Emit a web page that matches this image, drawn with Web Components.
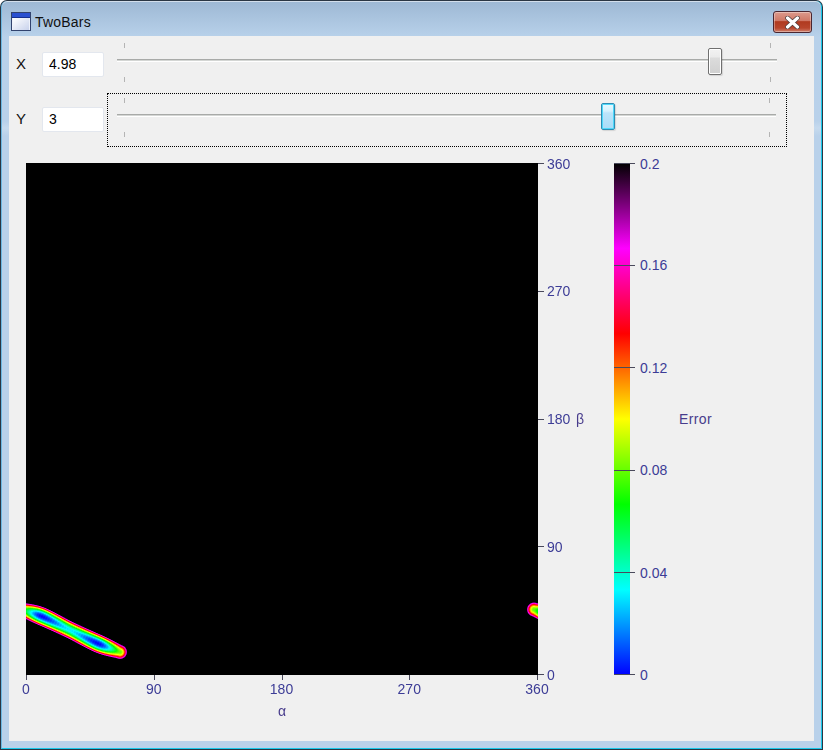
<!DOCTYPE html>
<html>
<head>
<meta charset="utf-8">
<title>TwoBars</title>
<style>
  html, body { margin: 0; padding: 0; background: #fff; }
  body { width: 823px; height: 750px; overflow: hidden; font-family: "Liberation Sans", Arial, sans-serif; }
</style>
</head>
<body>
<two-bars-window caption="TwoBars">
  <slider-row label="X" value="4.98" thumb="715"></slider-row>
  <slider-row label="Y" value="3" thumb="608" focused></slider-row>
  <plot-area></plot-area>
</two-bars-window>

<script>
class TwoBarsWindow extends HTMLElement {
  constructor() {
    super();
    this.attachShadow({ mode: "open" });
  }
  connectedCallback() {
    this.shadowRoot.innerHTML = `
      <style>
        :host {
          display: block;
          box-sizing: border-box;
          width: 823px;
          height: 750px;
          padding: 1px;
          border-radius: 7px 7px 0 0;
          background: #2a3644;
        }
        .frame {
          box-sizing: border-box;
          height: 100%;
          display: flex;
          flex-direction: column;
          padding: 0 7px 7px 7px;
          border-left: 1px solid #6cb8e2;
          border-right: 1px solid #18c8ea;
          border-bottom: 1px solid #18c8ea;
          border-radius: 6px 6px 0 0;
          background: linear-gradient(#9db8d4 0, #b8d1ea 36px, #b9d1ea 120px, #c6daee 127px, #b9d1ea 135px);
          box-shadow: inset 0 1px 0 rgba(255,255,255,.55);
        }
        .title {
          height: 35px;
          flex: none;
          display: flex;
          align-items: flex-start;
          gap: 4px;
          padding-left: 2px;
          font-size: 14px;
          letter-spacing: .2px;
          color: #111;
        }
        .title svg.ico { margin-top: 11px; flex: none; }
        .title span { margin-top: 13px; line-height: 16px; }
        .close {
          margin-left: auto;
          margin-right: 2px;
          margin-top: 10px;
          box-sizing: border-box;
          width: 39px;
          height: 22px;
          border: 1px solid #4a2630;
          border-radius: 3px;
          display: flex;
          align-items: center;
          justify-content: center;
          background: linear-gradient(#dc9a8c 0, #cf7765 45%, #b03a20 48%, #b8452c 80%, #d0806c 100%);
          box-shadow: inset 0 0 0 1px rgba(255,255,255,.35);
        }
        .client {
          flex: 1;
          background: #f0f0f0;
          display: flex;
          flex-direction: column;
          min-height: 0;
        }
      </style>
      <div class="frame">
        <div class="title">
          <svg class="ico" width="20" height="20" viewBox="0 0 20 20">
            <defs><linearGradient id="wg" x1="0" y1="0" x2="1" y2="1"><stop offset="0" stop-color="#ffffff"/><stop offset="1" stop-color="#c8d2ec"/></linearGradient></defs>
            <rect x="0.5" y="0.5" width="19" height="18" fill="#eef2fb" stroke="#32436e"/>
            <rect x="1" y="1" width="18" height="4" fill="#2a50d0"/>
            <rect x="1" y="5" width="18" height="1" fill="#16308f"/>
            <rect x="2" y="6" width="16" height="12" fill="url(#wg)"/>
          </svg>
          <span>${this.getAttribute("caption")}</span>
          <div class="close">
            <svg width="15" height="13" viewBox="0 0 15 13">
              <path d="M2.5 2 L12.5 11 M12.5 2 L2.5 11" stroke="#4a3a3a" stroke-width="4.6" stroke-linecap="round"/>
              <path d="M2.5 2 L12.5 11 M12.5 2 L2.5 11" stroke="#fff" stroke-width="3.2" stroke-linecap="round"/>
            </svg>
          </div>
        </div>
        <div class="client"><slot></slot></div>
      </div>`;
  }
}

class SliderRow extends HTMLElement {
  constructor() {
    super();
    this.attachShadow({ mode: "open" });
  }
  connectedCallback() {
    const focused = this.hasAttribute("focused");
    // thumb attr is the page x of the thumb centre; the row starts at page x 9
    const left = +this.getAttribute("thumb") - 9 - 99 - 7;
    // the unfocused row sits one pixel lower inside its box
    const d = focused ? 0 : 1;
    const endTick = focused ? 661 : 662;
    this.shadowRoot.innerHTML = `
      <style>
        :host { display: flex; align-items: flex-start; height: 56px; font-size: 14px; color: #000; }
        .lab { width: 33px; padding-left: 7px; box-sizing: border-box; font-size: 15px; line-height: 17px; margin-top: ${focused ? 18 : 19}px; color: #111; }
        input {
          box-sizing: border-box;
          width: 62px;
          height: 25px;
          margin: ${focused ? 15 : 16}px 0 0;
          padding: 0 6px 2px;
          border: 1px solid #e3e7ee;
          border-radius: 2px;
          background: #fff;
          font: 14px "Liberation Sans", Arial, sans-serif;
          color: #000;
          outline: none;
        }
        .bar {
          position: relative;
          box-sizing: border-box;
          width: 680px;
          height: 54px;
          margin: 1px 0 0 3px;
          border: 1px dotted ${focused ? "#000" : "transparent"};
          flex: none;
        }
        .track {
          position: absolute;
          left: 9px;
          right: ${focused ? 10 : 9}px;
          top: ${20 + d}px;
          height: 2px;
          background: linear-gradient(#a8aaa8 50%, #d4d6d4 50%);
          border-bottom: 1px solid #fff;
        }
        .tick { position: absolute; width: 1px; height: 5px; background: #b4b4b4; }
        .thumb {
          position: absolute;
          box-sizing: border-box;
          left: ${left}px;
          top: ${9 + d}px;
          width: 14px;
          height: 27px;
          border-radius: 2px;
          border: 1px solid ${focused ? "#2c8cb4" : "#707070"};
          background: ${focused
            ? "linear-gradient(#e6f9ff 0, #d6f2fe 7px, #bce4fa 9px, #a9dcf8 100%)"
            : "linear-gradient(#f2f2f2 0, #ebebeb 8px, #dcdcdc 9px, #d0d0d0 100%)"};
          box-shadow: inset 0 0 0 1px ${focused ? "#4fd8fa" : "#fff"}, 1px 1px 1px rgba(0,0,0,.12);
        }
      </style>
      <span class="lab">${this.getAttribute("label")}</span>
      <input value="${this.getAttribute("value")}">
      <div class="bar">
        <div class="tick" style="left:16px;top:${4 + d}px"></div>
        <div class="tick" style="left:${endTick}px;top:${4 + d}px"></div>
        <div class="track"></div>
        <div class="thumb"></div>
        <div class="tick" style="left:16px;top:${38 + d}px"></div>
        <div class="tick" style="left:${endTick}px;top:${38 + d}px"></div>
      </div>`;
  }
}

// same colour ramp for the heat map and the colour bar, v goes 0..0.2
const RAMP = [[0, 0, 255], [0, 255, 255], [0, 255, 0], [255, 255, 0], [255, 0, 0], [255, 0, 255], [0, 0, 0]];
function rampColor(v) {
  const t = Math.max(0, Math.min(1, v / 0.2)) * 6;
  const i = Math.min(5, Math.floor(t));
  const f = t - i;
  return RAMP[i].map((c, k) => Math.round(c + (RAMP[i + 1][k] - c) * f));
}

// valley of the error surface, in page pixels: x, y, value at the bottom
const KNOTS = [[22, 609.5, 0.08], [42, 616.5, 0.0], [70, 630, 0.03], [98, 643.5, 0.0], [120, 652, 0.08]];
const VALLEY = [];
for (let i = 0; i < KNOTS.length - 1; i++) {
  const p0 = KNOTS[Math.max(0, i - 1)], p1 = KNOTS[i], p2 = KNOTS[i + 1], p3 = KNOTS[Math.min(KNOTS.length - 1, i + 2)];
  for (let j = 0; j < 12; j++) {
    const t = j / 12, s = t * t * (3 - 2 * t);
    const cr = k => .5 * (2 * p1[k] + (p2[k] - p0[k]) * t + (2 * p0[k] - 5 * p1[k] + 4 * p2[k] - p3[k]) * t * t + (3 * p1[k] - p0[k] - 3 * p2[k] + p3[k]) * t * t * t);
    VALLEY.push([cr(0), cr(1), p1[2] + (p2[2] - p1[2]) * s]);
  }
}
VALLEY.push(KNOTS[KNOTS.length - 1]);

function errorAt(x, y) {
  let best = 1;
  for (const p of VALLEY) {
    const d2 = (x - p[0]) ** 2 + (y - p[1]) ** 2;
    best = Math.min(best, p[2] + 0.0022 * d2);
  }
  return best;
}

class HeatMap extends HTMLElement {
  constructor() {
    super();
    this.attachShadow({ mode: "open" });
  }
  connectedCallback() {
    this.shadowRoot.innerHTML = `
      <style>
        :host { display: block; width: 512px; height: 512px; background: #000; }
        canvas { display: block; width: 512px; height: 512px; }
      </style>
      <canvas width="512" height="512"></canvas>`;
    const ctx = this.shadowRoot.querySelector("canvas").getContext("2d");
    const img = ctx.createImageData(512, 512);
    for (let r = 0; r < 512; r++) {
      for (let c = 0; c < 512; c++) {
        const x = 26 + c + .5, y = 163 + r + .5;
        let v = 1;
        // only the bottom left corner and its wrap at 360 alpha hold anything
        if (y > 590 && y < 670) {
          if (x < 140) v = errorAt(x, y);
          if (x > 500) v = errorAt(x - 512, y);
        }
        const col = rampColor(v);
        const o = (r * 512 + c) * 4;
        img.data[o] = col[0]; img.data[o + 1] = col[1]; img.data[o + 2] = col[2]; img.data[o + 3] = 255;
      }
    }
    ctx.putImageData(img, 0, 0);
  }
}

class ColorBar extends HTMLElement {
  constructor() {
    super();
    this.attachShadow({ mode: "open" });
  }
  connectedCallback() {
    const stops = RAMP.map((c, i) => `rgb(${c}) ${(i * 100 / 6).toFixed(2)}%`).join(",");
    const labels = ["0", "0.04", "0.08", "0.12", "0.16", "0.2"];
    const ticks = labels.map((t, i) => `
      <i style="bottom:${i * 102.2}px"></i>
      <span style="bottom:${i === 5 ? 511 : i * 102.4}px">${t}</span>`).join("");
    this.shadowRoot.innerHTML = `
      <style>
        :host {
          display: block;
          position: relative;
          width: 16px;
          height: 512px;
          background: linear-gradient(to top, ${stops});
          font-size: 14px;
          color: var(--axis);
        }
        i { position: absolute; left: 0; width: 21px; height: 1px; background: #4a4a5c; }
        span { position: absolute; left: 26px; line-height: 16px; margin-bottom: -8px; }
        b {
          position: absolute;
          left: 65px;
          top: 248px;
          font-weight: normal;
          line-height: 16px;
          letter-spacing: .4px;
          color: #483c8c;
        }
      </style>
      ${ticks}
      <b>Error</b>`;
  }
}

class PlotArea extends HTMLElement {
  constructor() {
    super();
    this.attachShadow({ mode: "open" });
  }
  connectedCallback() {
    const marks = [0, 90, 180, 270, 360];
    const xm = marks.map((m, i) => `
      <i class="xt" style="left:${i * 127.75}px"></i>
      <span class="xl" style="left:${i * 127.75}px">${m}</span>`).join("");
    const ym = marks.map((m, i) => `
      <i class="yt" style="bottom:${i * 127.75}px"></i>
      <span class="yl" style="bottom:${i === 4 ? 511 : i * 128}px">${m}</span>`).join("");
    this.shadowRoot.innerHTML = `
      <style>
        :host {
          display: flex;
          --axis: #3c3c96;
          padding: 15px 0 0 17px;
          font-size: 14px;
          color: var(--axis);
        }
        .chart { position: relative; width: 512px; height: 512px; flex: none; }
        i { position: absolute; background: #4a4a5c; }
        .xt { top: 512px; width: 1px; height: 5px; }
        .yt { left: 512px; width: 6px; height: 1px; }
        span { position: absolute; line-height: 16px; }
        .xl { top: 518px; width: 40px; margin-left: -20px; text-align: center; }
        .yl { left: 521px; margin-bottom: -8px; }
        .name { color: #483c8c; }
        .alpha { left: 256px; top: 540px; width: 0; display: flex; justify-content: center; }
        .beta { left: 550px; top: 248px; }
        color-bar { margin-left: 76px; }
      </style>
      <div class="chart">
        <heat-map></heat-map>
        ${xm}${ym}
        <span class="name alpha">α</span>
        <span class="name beta">β</span>
      </div>
      <color-bar></color-bar>`;
  }
}

customElements.define("two-bars-window", TwoBarsWindow);
customElements.define("slider-row", SliderRow);
customElements.define("heat-map", HeatMap);
customElements.define("color-bar", ColorBar);
customElements.define("plot-area", PlotArea);
</script>
</body>
</html>
